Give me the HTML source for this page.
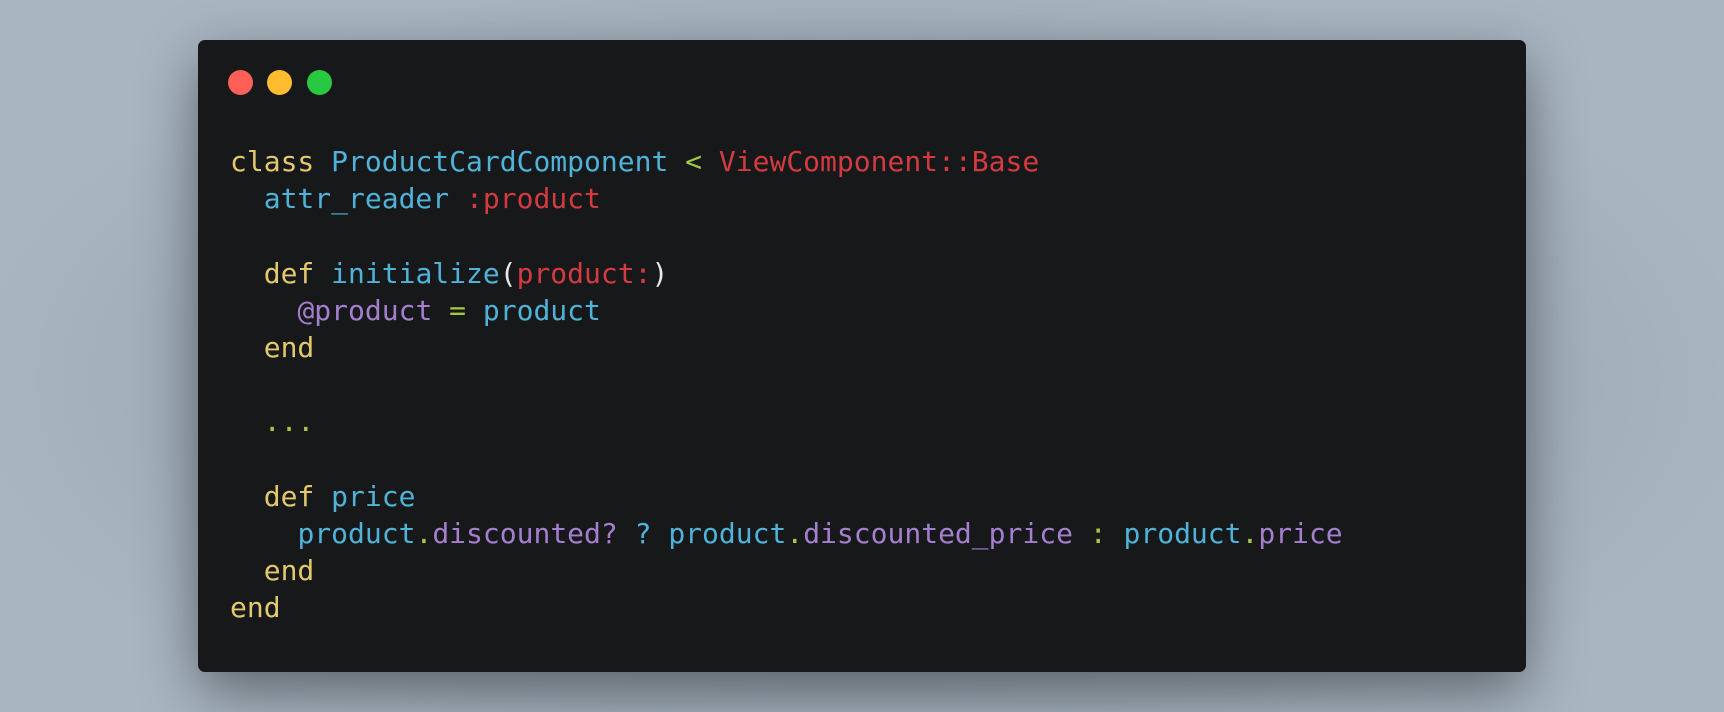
<!DOCTYPE html>
<html><head><meta charset="utf-8"><style>
html,body{margin:0;padding:0;width:1724px;height:712px;overflow:hidden;background:#a8b5c1;}
body{background:radial-gradient(ellipse 900px 420px at 862px 380px,#7f8c98 0%,#99a6b2 50%,#a9b6c2 100%);}
.win{position:absolute;left:198px;top:40px;width:1328px;height:632px;background:#17181a;border-radius:7px;box-shadow:0 20px 60px rgba(0,0,0,0.45);}
.dot{position:absolute;top:70px;width:25px;height:25px;border-radius:50%;}
pre{position:absolute;left:230px;top:143px;margin:0;font-family:"DejaVu Sans Mono","Liberation Mono",monospace;font-size:28px;line-height:37.2px;color:#e6e6e6;}
.y{color:#e3c86d}.b{color:#4fb3d9}.r{color:#d33b40}.p{color:#a57fcf}.g{color:#a4c93e}.w{color:#e8e8e8}
</style></head><body>
<div class="win"></div>
<div class="dot" style="left:228px;background:#fe5f57"></div>
<div class="dot" style="left:267px;background:#febc2e"></div>
<div class="dot" style="left:307px;background:#28c840"></div>
<pre><span class="y">class</span> <span class="b">ProductCardComponent</span> <span class="g">&lt;</span> <span class="r">ViewComponent::Base</span>
  <span class="b">attr_reader</span> <span class="r">:product</span>

  <span class="y">def</span> <span class="b">initialize</span><span class="w">(</span><span class="r">product:</span><span class="w">)</span>
    <span class="p">@product</span> <span class="g">=</span> <span class="b">product</span>
  <span class="y">end</span>

  <span class="g">...</span>

  <span class="y">def</span> <span class="b">price</span>
    <span class="b">product</span><span class="g">.</span><span class="p">discounted?</span> <span class="b">?</span> <span class="b">product</span><span class="g">.</span><span class="p">discounted_price</span> <span class="g">:</span> <span class="b">product</span><span class="g">.</span><span class="p">price</span>
  <span class="y">end</span>
<span class="y">end</span></pre>
</body></html>
